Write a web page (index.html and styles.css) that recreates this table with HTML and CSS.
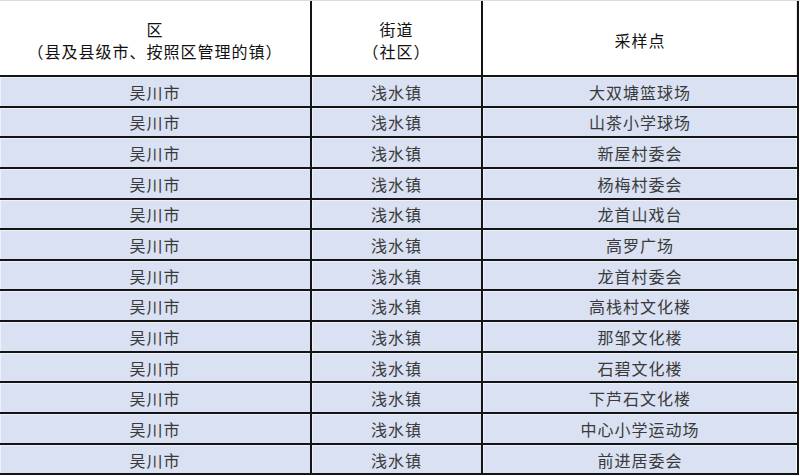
FILE: index.html
```html
<!DOCTYPE html>
<html lang="zh">
<head>
<meta charset="utf-8">
<link rel="stylesheet" href="styles.css">
</head>
<body>
<div class="sheet">
  <div class="grid">
    <div class="cell head">区<br>（县及县级市、按照区管理的镇）</div>
    <div class="cell head">街道<br>（社区）</div>
    <div class="cell head last">采样点</div>

    <div class="cell row">吴川市</div><div class="cell row">浅水镇</div><div class="cell row last">大双塘篮球场</div>
    <div class="cell row">吴川市</div><div class="cell row">浅水镇</div><div class="cell row last">山茶小学球场</div>
    <div class="cell row">吴川市</div><div class="cell row">浅水镇</div><div class="cell row last">新屋村委会</div>
    <div class="cell row">吴川市</div><div class="cell row">浅水镇</div><div class="cell row last">杨梅村委会</div>
    <div class="cell row">吴川市</div><div class="cell row">浅水镇</div><div class="cell row last">龙首山戏台</div>
    <div class="cell row">吴川市</div><div class="cell row">浅水镇</div><div class="cell row last">高罗广场</div>
    <div class="cell row">吴川市</div><div class="cell row">浅水镇</div><div class="cell row last">龙首村委会</div>
    <div class="cell row">吴川市</div><div class="cell row">浅水镇</div><div class="cell row last">高栈村文化楼</div>
    <div class="cell row">吴川市</div><div class="cell row">浅水镇</div><div class="cell row last">那邹文化楼</div>
    <div class="cell row">吴川市</div><div class="cell row">浅水镇</div><div class="cell row last">石碧文化楼</div>
    <div class="cell row">吴川市</div><div class="cell row">浅水镇</div><div class="cell row last">下芦石文化楼</div>
    <div class="cell row">吴川市</div><div class="cell row">浅水镇</div><div class="cell row last">中心小学运动场</div>
    <div class="cell row">吴川市</div><div class="cell row">浅水镇</div><div class="cell row last">前进居委会</div>
  </div>
</div>
</body>
</html>
```

FILE: styles.css
```css
html, body {
  margin: 0;
  padding: 0;
  background: #ffffff;
}

.sheet {
  width: 800px;
  height: 476px;
  overflow: hidden;
  border-top: 1px solid #dcdcdc;
  box-sizing: border-box;
  font-family: "Noto Sans CJK SC", "Noto Sans", sans-serif;
}

.grid {
  display: grid;
  grid-template-columns: 312px 171px 316px;
  grid-template-rows: 76px;
  grid-auto-rows: 30.65px;
}

.cell {
  display: flex;
  align-items: center;
  justify-content: center;
  text-align: center;
  border-right: 2px solid #141414;
  border-bottom: 2px solid #141414;
  box-sizing: border-box;
  font-size: 16px;
  letter-spacing: 1px;
}

.head {
  background: #ffffff;
  color: #111111;
  line-height: 22px;
  padding-top: 4px;
}

.row {
  background: #d9e1f2;
  color: #3a3a3a;
  box-shadow: inset 1px 1px 0 rgba(255, 255, 255, 0.55);
  padding-top: 1px;
}

.last {
  box-shadow: inset -1px 0 0 #e6e6e6;
}

.row.last {
  box-shadow: inset 1px 1px 0 rgba(255, 255, 255, 0.55), inset -1px 0 0 #f4f4f4;
}
```
